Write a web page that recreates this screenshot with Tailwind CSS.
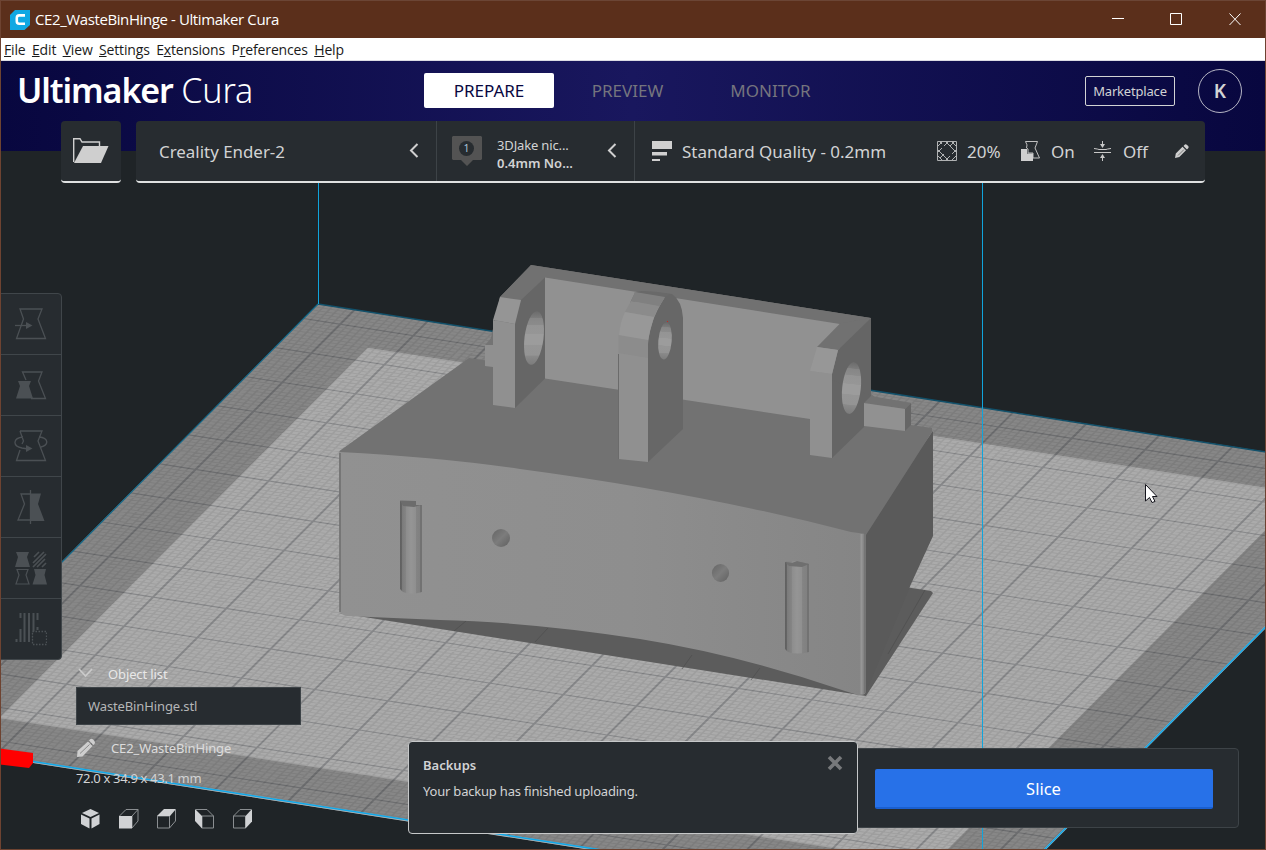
<!DOCTYPE html>
<html lang="en">
<head>
<meta charset="utf-8">
<title>CE2_WasteBinHinge - Ultimaker Cura</title>
<script src="https://cdn.jsdelivr.net/npm/@tailwindcss/browser@4"></script>
</head>
<body class="relative h-[850px] w-[1266px] overflow-hidden bg-[#1f2427] font-['Noto_Sans',sans-serif] text-[#d2d3d4]">

<!-- 3D viewport -->
<svg class="absolute inset-0" width="1266" height="850" viewBox="0 0 1266 850">
  <defs>
    <linearGradient id="front" x1="340" x2="866" y1="0" y2="0" gradientUnits="userSpaceOnUse">
      <stop offset="0" stop-color="#919191"/><stop offset=".55" stop-color="#8e8e8e"/><stop offset=".8" stop-color="#898989"/><stop offset="1" stop-color="#858585"/>
    </linearGradient>
    <linearGradient id="bore" x1="0" x2="0" y1="0" y2="1">
      <stop offset="0" stop-color="#6b6b6b"/><stop offset=".12" stop-color="#7b7b7b"/><stop offset=".13" stop-color="#868686"/><stop offset=".25" stop-color="#8b8b8b"/><stop offset=".26" stop-color="#949494"/><stop offset=".42" stop-color="#969696"/><stop offset=".43" stop-color="#9c9c9c"/><stop offset=".62" stop-color="#9c9c9c"/><stop offset=".63" stop-color="#959595"/><stop offset=".82" stop-color="#949494"/><stop offset=".83" stop-color="#8a8a8a"/><stop offset="1" stop-color="#7c7c7c"/>
    </linearGradient>
    <linearGradient id="slot">
      <stop offset="0" stop-color="#606060"/><stop offset=".09" stop-color="#666"/><stop offset=".1" stop-color="#7b7b7b"/><stop offset=".28" stop-color="#858585"/><stop offset=".29" stop-color="#8d8d8d"/><stop offset=".5" stop-color="#959595"/><stop offset=".72" stop-color="#8f8f8f"/><stop offset=".73" stop-color="#848484"/><stop offset=".92" stop-color="#808080"/><stop offset=".93" stop-color="#727272"/>
    </linearGradient>
    <linearGradient id="pin" x1="0" x2="1" y1="0" y2="1">
      <stop offset="0" stop-color="#656565"/><stop offset=".5" stop-color="#7c7c7c"/><stop offset="1" stop-color="#606060"/>
    </linearGradient>
  </defs>
  <!-- build plate, user units are millimetres -->
  <g transform="matrix(7.317 1.141 -2.891 2.905 318 304)">
    <rect width="150" height="150" fill="#878787"/>
    <rect x="11" y="10.700" width="127.700" height="127.500" fill="#ababab"/>
    <path id="minor" stroke="#000" stroke-opacity=".075" stroke-width=".28" fill="none"/>
    <path id="major" stroke="#20242c" stroke-opacity=".26" stroke-width=".32" fill="none"/>
  </g>
  <path d="M318 304 1266 452" stroke="#12516b" stroke-width="1.6"/>
  <path d="M318 304 0 624.5" stroke="#126a8c" stroke-width="1.2"/>
  <path d="M30 761.500 600 850.300M1266 626.500 1044 850" stroke="#a9b4b9" stroke-width="2.200"/>
  <path d="M30 761 600 849.800M1266 626.500 1044 850" stroke="#10a7e8" stroke-width="1.500"/>
  <path d="M318.500 183V304M982.500 183V850" stroke="#10a4dc"/>
  <path d="M0 748.500 33 753V763L29 768 0 764.500Z" fill="#f00"/>

  <!-- shadow below the part -->
  <path d="M339 613 866 696 933 593 931 591 905 587 800 600 500 600Z" fill="#5c5c5c"/>
  <path d="M454 631 466 621M535 642 548 628M682 669 692 655M751 680 760 668M888 654 925 590" stroke="#4c4c4c" stroke-width="1" opacity=".6"/>
  <!-- body -->
  <path d="M933 431V536L911 584 866 692 860 532Z" fill="#5a5a5a"/>
  <path d="M339.500 451 469 358 486 360.500 500 297 531 265 871 318 871 394 911 425 932 428V432L866 535V560H340Z" fill="#727272"/>
  <path d="M339.500 452Q438 457 520 469Q700 493 851 532L866 534V692Q864 696 858 695L845 691Q740 655 640 639Q530 622 440 620L347 616Q340 615 340 609Z" fill="url(#front)"/>
  <path d="M340 453V612" stroke="#6e6e6e" stroke-width="1.500"/>
  <path d="M861.500 534V694" stroke="#969696" stroke-width="2"/><path d="M865 533V693" stroke="#707070" stroke-width="1.500"/>
  <path d="M485 345 493 338V367L485 366Z" fill="#909090"/><path d="M485 345 493 336V345Z" fill="#747474"/>
  <!-- back wall -->
  <path d="M531 265 871 318 838 324 545 277.500 521 301 500 297Z" fill="#717171"/>
  <path d="M545 277.500 840 324 838 420 810 419 545 378.500Z" fill="#919191"/>
  <!-- left lug -->
  <path d="M545 277.500V378.500L515 408V322L521 300Z" fill="#666"/>
  <path d="M500 297 521 300 515 324 493 320Z" fill="#959595"/>
  <path d="M493 320 515 324V408L493 405Z" fill="#909090"/>
  <clipPath id="lugHole"><ellipse cx="534" cy="338" rx="9.500" ry="27" transform="rotate(7 534 338)"/></clipPath>
  <path clip-path="url(#lugHole)" d="M520 311H544V365H520Z" fill="url(#bore)"/>
  <!-- centre lug -->
  <path d="M634 293Q640 290 648 292L672 294Q682 301 683 318V429L648 462V350Q647 325 665 297Z" fill="#676767"/>
  <path d="M635 293Q646 289 670 294L664 298 630 303Z" fill="#696969"/>
  <path d="M635 292 665 297 659 307 631 301Z" fill="#808080"/>
  <path d="M631 301 659 306 654 317 625 312Z" fill="#8b8b8b"/>
  <path d="M625 312 654 317Q650 330 648 341L619 336Q620 322 625 312Z" fill="#989898"/>
  <path d="M618.500 335 648 340V358L618.500 354Z" fill="#8c8c8c"/>
  <path d="M618.500 353 648 358V462L618.500 459Z" fill="#909090"/>
  <path d="M618.500 354V459" stroke="#6b6b6b"/>
  <ellipse cx="665" cy="341" rx="6.700" ry="18.500" fill="url(#bore)" transform="rotate(5 665 341)"/>
  <rect x="667" y="321" width="1" height="1" fill="#c22"/>
  <!-- right lug -->
  <path d="M840 323.500 871 318 838 350 817 347Z" fill="#717171"/>
  <path d="M871 318V396L832 458V374L838 350Z" fill="#656565"/>
  <path d="M871 396 864 403V427L832 458V380Z" fill="#656565"/>
  <path d="M817 347 838 350 832 374 810 371Z" fill="#979797"/>
  <path d="M810 371 832 374V458L810 455Z" fill="#909090"/>
  <ellipse cx="851.500" cy="388" rx="9.300" ry="26" fill="url(#bore)" transform="rotate(6 851.500 388)"/>
  <path d="M864 403 871 396 911 403 905 409Z" fill="#727272"/><path d="M864 403 905 409V431L864 426Z" fill="#919191"/><path d="M905 409 911 403V425L905 431Z" fill="#666"/>
  <!-- slots and pin holes -->
  <path d="M400 501 416 502V505H422V592Q411 595 403 592L400 589Z" fill="url(#slot)"/><path d="M400 500.500 416 501V505L421 505 414 507 403 506Z" fill="#6c6c6c"/>
  <path d="M785 562 797 561 809 564V652Q797 655 788 652L785 649Z" fill="url(#slot)"/><path d="M785 562 792 563 797 561 809 564 802 567 789 566Z" fill="#6f6f6f"/>
  <ellipse cx="501" cy="538" rx="9" ry="9" fill="url(#pin)"/><ellipse cx="720.500" cy="573" rx="8.600" ry="9" fill="url(#pin)"/>
  <!-- pointer -->
  <path d="M1145.500 484.500V501L1149.500 497.500 1152 502.500 1155 501.500 1152.500 496.500H1157Z" fill="#fff" stroke="#14141c"/>
</svg>

<div class="relative flex h-full flex-col">
  <!-- title bar -->
  <header class="flex h-[38px] shrink-0 items-center border-t border-[#6b4535] bg-[#5b2f1b] pl-2.5 text-white">
    <svg width="20" height="20" viewBox="0 0 20 20"><path d="M5 0H20V15L14.500 20H0V5Z" fill="#10a8e3"/><path d="M15 5.400H9.300Q6.800 5.400 6.800 8V11.200Q6.800 13.700 9.300 13.700H15" fill="none" stroke="#fff" stroke-width="2.600"/></svg>
    <span class="-mt-0.5 ml-[5px] whitespace-nowrap font-['Open_Sans'] text-[15px] leading-5 tracking-[-0.4px]">CE2_WasteBinHinge - Ultimaker Cura</span>
    <svg class="ml-auto mr-6" width="130" height="14" viewBox="0 0 130 14" fill="none" stroke="#fff" stroke-width="1"><path d="M0 5.500H12M58.500 .500H69.500V11.500H58.500ZM117.500 .500 128.500 12M128.500 .500 117.500 12"/></svg>
  </header>
  <!-- menu -->
  <nav class="flex h-[23px] shrink-0 items-center gap-[6.400px] border-b border-[#dcdce4] bg-white pl-1 font-['Open_Sans'] text-[14px] tracking-[-0.15px] text-[#1a1a1a]">
    <span><u>F</u>ile</span><span><u>E</u>dit</span><span><u>V</u>iew</span><span><u>S</u>ettings</span><span>E<u>x</u>tensions</span><span>P<u>r</u>eferences</span><span><u>H</u>elp</span>
  </nav>
  <!-- stage header -->
  <div class="flex h-[90px] shrink-0 items-start bg-linear-to-r from-[#08073f] via-[#19175e] to-[#08073f]">
    <div class="w-[424px] whitespace-nowrap pl-[17px] pt-[6px] text-[34px] leading-[46px] tracking-[-0.2px] text-white"><span class="font-semibold tracking-[-1.1px]">Ultimaker</span> <span class="font-light">Cura</span></div>
    <div class="mt-3 flex h-[35px] items-center text-[17px] text-[#75757e]">
      <span class="flex h-[35px] w-[130px] items-center justify-center rounded-xs bg-white text-[#08073f]">PREPARE</span>
      <span class="w-[147px] text-center">PREVIEW</span>
      <span class="w-[139px] text-center">MONITOR</span>
    </div>
    <span class="ml-auto mt-[15px] flex h-[30px] w-[90px] items-center justify-center rounded-xs border border-[#d2d3d4] pt-px text-[13px] tracking-[-0.18px]">Marketplace</span>
    <span class="ml-[23px] mr-6 mt-2 flex size-11 items-center justify-center rounded-full border-[1.500px] border-[#b5b5c4] text-[19px] font-semibold">K</span>
  </div>
  <!-- configuration bar -->
  <div class="-mt-[30px] ml-[61px] flex h-[62px] shrink-0 gap-[15px]">
    <div class="flex w-[60px] items-center justify-center rounded-[4px] border-b-2 border-[#dfe1e1] bg-[#272c30]">
      <svg width="36" height="28" viewBox="0 0 36 28"><path d="M.700 25V1.700H7L9 5H26.500V9" fill="none" stroke="#d0d0d0" stroke-width="1.400"/><path d="M10 9H35.500L28 26H1Z" fill="#cfcfcf"/></svg>
    </div>
    <div class="flex w-[1069px] rounded-[4px] border-b-2 border-[#dfe1e1] bg-[#272c30]">
      <div class="flex w-[301px] items-center justify-between border-r border-[#3d4347] pl-[23px] pr-[17px] text-[16.900px]"><span class="pt-0.5">Creality Ender-2</span>
        <svg width="10" height="16" viewBox="0 0 10 16" fill="none" stroke="#d0d0d0" stroke-width="2"><path d="M8.500 1 2 7.500 8.500 14"/></svg></div>
      <div class="flex w-[198px] items-center border-r border-[#3d4347] pl-[15px] pr-[17px]">
        <svg width="30" height="30" viewBox="0 0 30 30"><path d="M1 0H29L30 1V23L29 24H21L15 30 9 24H1L0 23V1Z" fill="#535353"/><circle cx="14.500" cy="12.500" r="7.500" fill="#272c30"/><text x="14.500" y="16" text-anchor="middle" font-size="10.500" fill="#a9c4d8">1</text></svg>
        <div class="ml-[15px] whitespace-nowrap pt-1.5 text-[13px] leading-[18px]"><span class="tracking-[-0.15px]">3DJake nic...</span><br><b class="font-semibold">0.4mm No...</b></div>
        <svg class="ml-auto" width="10" height="16" viewBox="0 0 10 16" fill="none" stroke="#d0d0d0" stroke-width="2"><path d="M8.500 1 2 7.500 8.500 14"/></svg>
      </div>
      <div class="flex flex-1 items-center whitespace-nowrap pl-[17px] text-[17px]">
        <svg width="20" height="20" viewBox="0 0 20 20" fill="#d0d0d0"><path d="M0 0H20V8H0ZM0 11H15V14.500H0ZM0 18H8V20H0Z"/></svg>
        <span class="ml-[10px] w-[255px] pt-0.5">Standard Quality - 0.2mm</span>
        <svg width="20" height="20" viewBox="0 0 20 20" fill="none" stroke="#b0b2b3"><path d="M.500.500H19.500V19.500H.500ZM0 6 6 0M0 12 5 7M7 5 12 0M13 5 17.500 .500M8 20 13 15M15 13 20 8M14 20 20 14M14 0 20 6M8 0 20 12M2.500 .500 5 3M0 8 12 20M0 14 6 20M3 17 7 13"/></svg>
        <span class="ml-[10px] w-[54px] pt-0.5">20%</span>
        <svg width="20" height="20" viewBox="0 0 20 20"><path d="M4.500 .500H16.500L14 7 18.500 17H12V12H7V8L5.500 7Q7 4 4.500 .500Z" fill="none" stroke="#c0c0c0"/><path d="M0 8H6V12.500H12V20H0Z" fill="#cfcfcf"/></svg>
        <span class="ml-[10px] w-[43px] pt-0.5">On</span>
        <svg width="18" height="20" viewBox="0 0 18 20" stroke="#c8c8c8" fill="#c8c8c8"><path d="M0 7.500Q4 8 5 8.500H12Q13 8 17 7.500M0 11.500H17" fill="none"/><path d="M8.500 0V4M8.500 20V15" /><path d="M6 3H11L8.500 7ZM6 17H11L8.500 13Z" stroke="none"/></svg>
        <span class="ml-[11px] w-[52px] pt-0.5">Off</span>
        <svg width="14" height="14" viewBox="0 0 14 14" fill="#cfcfcf"><path d="M0 14 .800 9.500 7.500 2.800 11 6.300 4.300 13ZM8.500 1.900 9.900.500Q11 0 12 .900L13.200 2Q14 3 13.400 4L12 5.400Z"/><path d="M3 11.500 9 5.500" stroke="#555" stroke-width=".7"/></svg>
      </div>
    </div>
  </div>
</div>

<!-- tool panel -->
<div class="absolute left-0 top-[293px] flex h-[367px] w-[62px] flex-col divide-y divide-[#40464a] rounded-r-[4px] border border-[#40464a] bg-[#272c30] text-[#4b5054]">
  <div class="flex flex-1 items-center justify-center"><svg width="32" height="32" viewBox="0 0 32 32" fill="none" stroke="currentColor" stroke-width="1.300"><path d="M5 1H27L23 11 30.500 30.500H1.500L8.500 11Z"/><path d="M0 17.500H12"/><path d="M11 14 17.500 17.500 11 21Z" fill="currentColor" stroke="none"/></svg></div>
  <div class="flex flex-1 items-center justify-center"><svg width="32" height="32" viewBox="0 0 32 32" fill="none" stroke="currentColor" stroke-width="1.300"><path d="M11 11 7.500 3H27L23.500 12 30.500 29.500H16"/><path d="M3 12H16L14 17 18 29.500H1L5 17Z" fill="currentColor" stroke="none"/></svg></div>
  <div class="flex flex-1 items-center justify-center"><svg width="34" height="32" viewBox="0 0 34 32" fill="none" stroke="currentColor" stroke-width="1.300"><path d="M6 1H28L24 11 31.500 30.500H2.500L6 20M8 14 9.500 11 6 1M9 7C-1 8-2 16 8 18L14 19M25 7C35 8 35 15 27 17"/><path d="M12 15 18.500 18.500 12 22Z" fill="currentColor" stroke="none"/></svg></div>
  <div class="flex flex-1 items-center justify-center"><svg width="32" height="34" viewBox="0 0 32 34" fill="none" stroke="currentColor" stroke-width="1.300"><path d="M15.500 0V34M15 4H6L9.500 14 3 30H15"/><path d="M16 3.500H26L23 14 29.500 31H16Z" fill="currentColor" stroke="none"/></svg></div>
  <div class="flex flex-1 items-center justify-center"><svg width="32" height="34" viewBox="0 0 32 34"><g fill="currentColor"><path d="M1 1H14L12 6 15 16H0L3 6ZM19 18H31L29.500 24 32 33.500H17.500L20.500 24Z"/></g><path d="M2 18.500H13L11 24 14 33H1L4 24Z" fill="none" stroke="currentColor" stroke-width="1.200"/><path d="M19 6 24 1M18 12 29 1M18 16 31 3M22 16 30 8M27 16 31 12" stroke="currentColor" stroke-width="1.700"/></svg></div>
  <div class="flex flex-1 items-center justify-center"><svg width="32" height="34" viewBox="0 0 32 34" fill="none" stroke="currentColor"><path d="M5.500 1V6M5.500 17V30M9.500 1V30M14 1V30M18.500 1V30M22.500 1V8M22.500 15V18M1.500 27V30" stroke-width="2"/><path d="M17.500 19.500H31.500V32.500H17.500Z" fill="#272c30" stroke-width="1.300" stroke-dasharray="1.500 1.500"/></svg></div>
</div>

<!-- object list -->
<section class="absolute left-[76px] top-[664px] flex w-[226px] flex-col text-[13px] leading-5 tracking-[-0.12px]">
  <div class="flex h-[23px] items-start text-[#e8e8e8]"><svg class="ml-[2px] mt-[4px]" width="15" height="10" viewBox="0 0 15 10" fill="none" stroke="#cacaca" stroke-width="1.800"><path d="M1 1 7.500 8 14 1"/></svg><span class="ml-[15px]">Object list</span></div>
  <div class="flex h-[38px] w-[225px] items-center border border-[#3d4347] bg-[#272c30] pl-[11px] text-[#b4b6b7]">WasteBinHinge.stl</div>
  <div class="mt-[13px] flex h-5 items-center"><svg width="20" height="20" viewBox="0 0 20 20" fill="#cecece"><path d="M1 19 1.500 13 12 3.500 16.500 8 6.500 18.500ZM13 2.500 14.500 1Q16 .500 17 1.500L18.500 3Q19.500 4.500 18.500 6L17.300 7Z"/><path d="M4 15.500 13.500 6.500" stroke="#8a8a8a"/></svg><span class="ml-[15px] text-[#dcdcdc]">CE2_WasteBinHinge</span></div>
  <div class="mt-[10px] tracking-[-0.34px]">72.0 x 34.9 x 43.1 mm</div>
  <div class="ml-[5px] mt-[21px] flex gap-[18px]">
    <svg width="20" height="20" viewBox="0 0 20 20" fill="#d0d2d4"><path d="M9.500 0 18 4 9.500 8 1 4ZM0 5.500 8.500 9.500V19.500L0 15ZM10.500 9.500 18.500 5.500V15L10.500 19.500Z"/></svg>
    <svg width="20" height="20" viewBox="0 0 20 20" fill="none" stroke="#8a8e91"><path d="M.500 7 7 .500H19V12L13 19V7L19 .500"/><path d="M0 7H13V19.500H0Z" fill="#d0d2d4" stroke="none"/></svg>
    <svg width="20" height="20" viewBox="0 0 20 20" fill="none" stroke="#8a8e91"><path d="M.500 7H12.500V19H.500ZM12.500 19 18.500 12V1"/><path d="M0 7 7 0H19L13 7Z" fill="#d0d2d4" stroke="none"/></svg>
    <svg width="20" height="20" viewBox="0 0 20 20" fill="none" stroke="#8a8e91"><path d="M7 7H18.500V19H7ZM1 .500H12L18.500 7"/><path d="M0 0 7 7V19.500L0 12Z" fill="#d0d2d4" stroke="none"/></svg>
    <svg width="20" height="20" viewBox="0 0 20 20" fill="none" stroke="#8a8e91"><path d="M12.500 7H.500V19H12.500ZM.500 7 7 .500H18"/><path d="M19 0 12.500 7V19.500L19 12.500Z" fill="#d0d2d4" stroke="none"/></svg>
  </div>
</section>

<!-- slice panel -->
<div class="absolute left-[840px] top-[748px] flex h-20 w-[399px] rounded-[4px] border border-[#3d4347] bg-[#272c30] pl-[34px] pt-5">
  <span class="flex h-10 w-[338px] items-center justify-center rounded-xs border-b-2 border-[#1a5fd0] bg-[#2771e8] pr-px pt-0.5 text-[16.500px] text-white">Slice</span>
</div>

<!-- backup message -->
<div class="absolute left-[408px] top-[741px] flex h-[93px] w-[450px] flex-col rounded-[4px] border border-[#c6c8c9] bg-[#272c30] px-[14px] pt-[13px] text-[13px] leading-5">
  <div class="flex justify-between"><b class="font-semibold">Backups</b><svg width="16" height="16" viewBox="0 0 16 16" stroke="#77797b" stroke-width="3.600"><path d="M2 2 14 14M14 2 2 14"/></svg></div>
  <p class="mt-1.5 tracking-[-0.2px]">Your backup has finished uploading.</p>
</div>

<!-- window frame -->
<div class="pointer-events-none absolute inset-0 border border-t-0 border-[#6e4331]"></div>

<script>
  // grid lines: one per millimetre, a heavier one per centimetre from the plate centre
  let minor = '', major = '';
  for (let i = 0; i <= 150; i++) {
    const d = `M${i} 0V150M0 ${i}H150`;
    if (i % 10 === 5) major += d; else minor += d;
  }
  document.getElementById('minor').setAttribute('d', minor);
  document.getElementById('major').setAttribute('d', major);
</script>
</body>
</html>
